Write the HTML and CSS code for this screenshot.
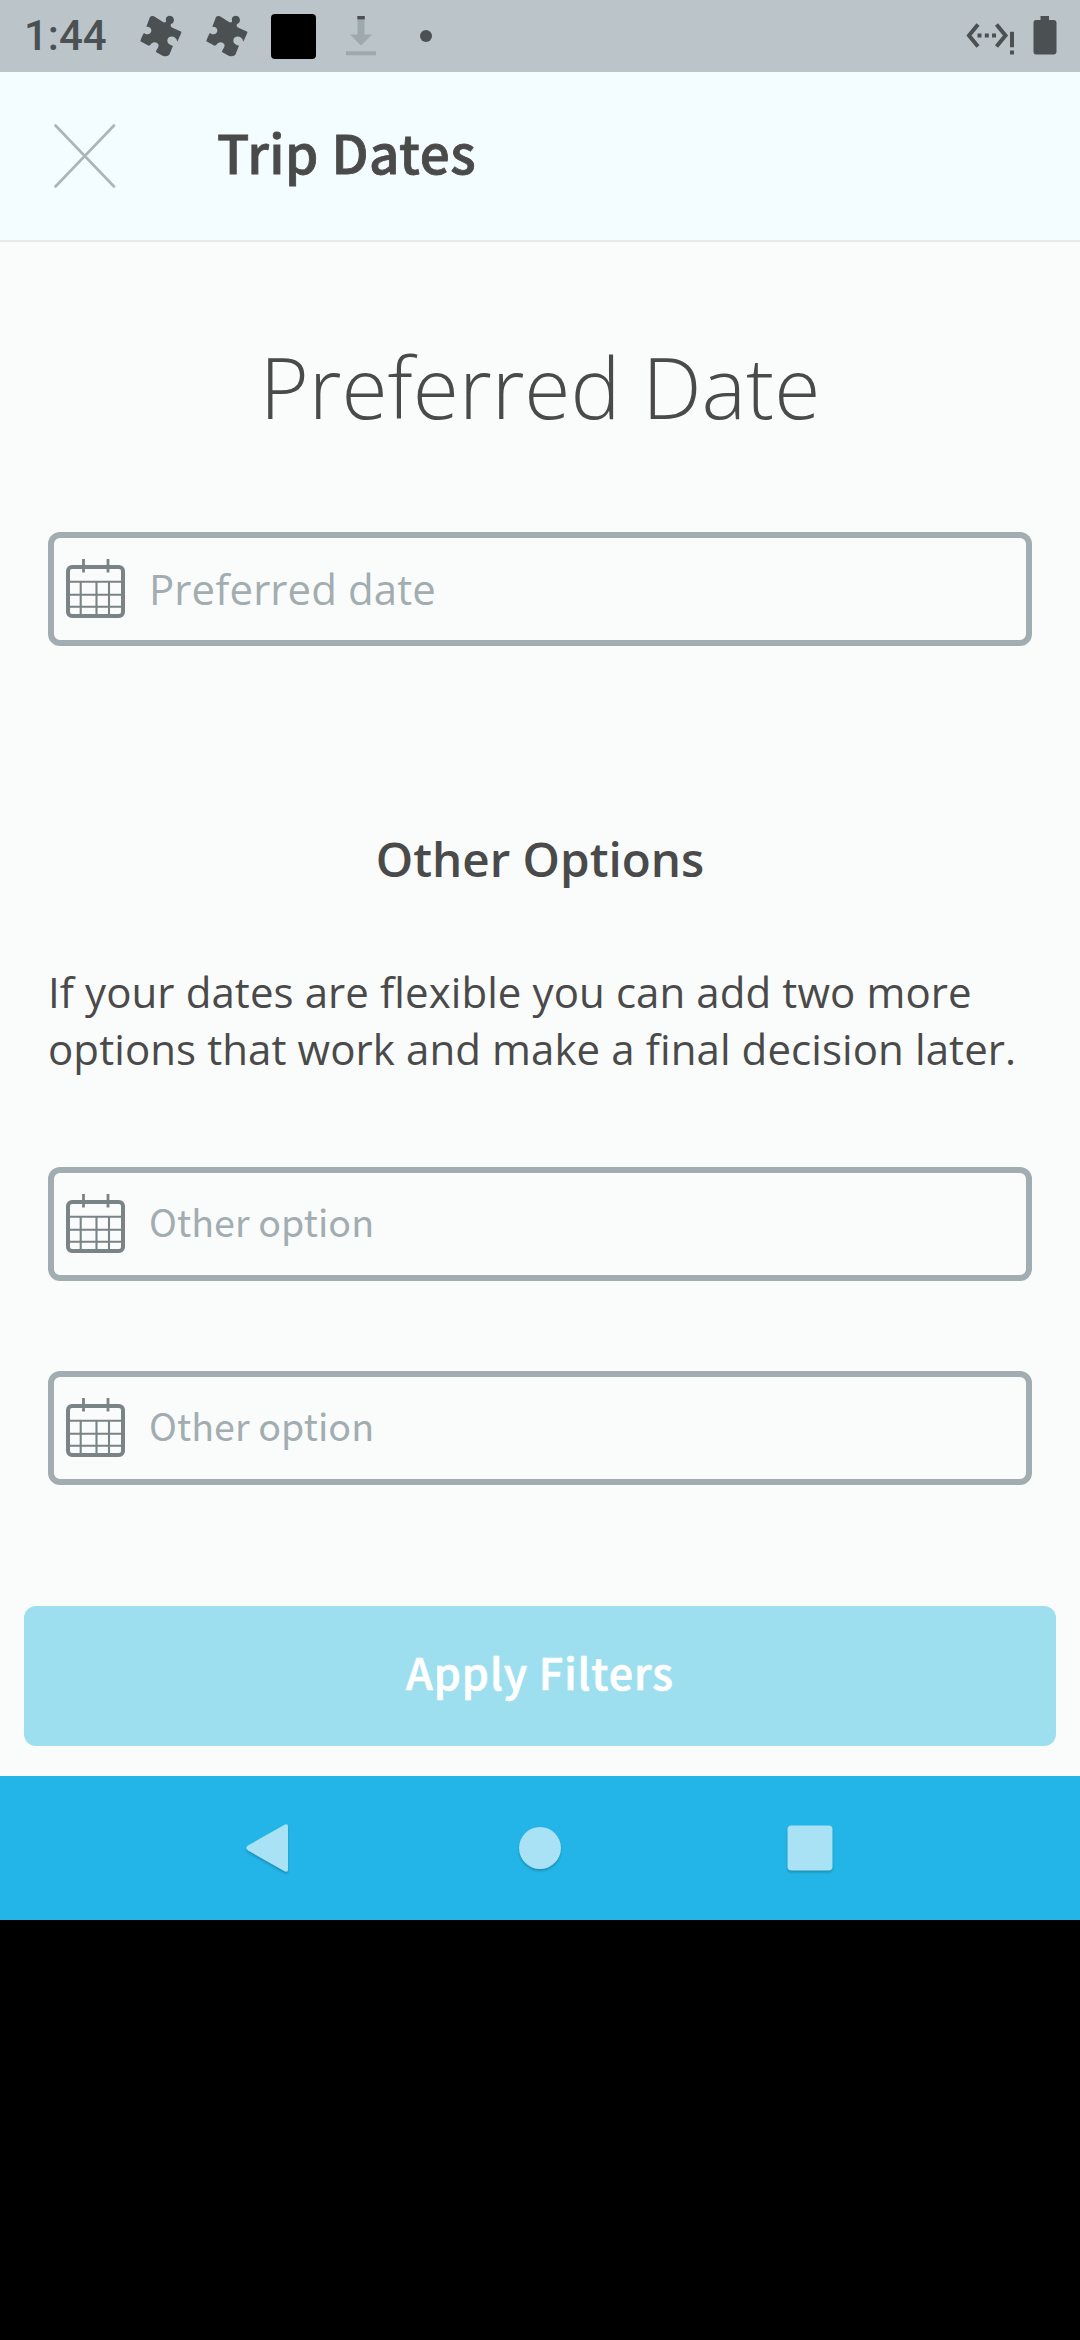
FILE: index.html
```html
<!DOCTYPE html>
<html lang="en">
<head>
<meta charset="utf-8">
<title>Trip Dates</title>
<link rel="stylesheet" href="styles.css">
</head>
<body>
<svg width="0" height="0" class="defs">
  <symbol id="puzzle" viewBox="418 42 132 132">
    <path d="M463 49L490 66Q500 70 499 62Q496 50 508 47Q522 47 523 60Q522 70 514 72Q510 80 520 84L545 95Q546 97 543 103L533 125C529 104 503 106 503 122Q503 133 520 137L509 164Q500 172 489 167L470 157C466 150 480 144 476 133Q468 122 456 130Q452 137 447 137L422 124Q422 118 433 98C440 108 456 102 455 90Q454 80 440 80L451 51Q456 46 463 49Z"/>
  </symbol>
  <symbol id="calendar" viewBox="0 0 60 60">
    <rect x="2" y="8" width="55" height="49" rx="4" fill="none" stroke-width="4"/>
    <path d="M17.5 0V13.5M42 0V13.5" stroke-width="2.8"/>
    <path d="M3 22.7H56M3 35.7H56M3 47.7H56M14.7 22.7V56M30.5 22.7V56M43 22.7V56" stroke-width="2.1"/>
  </symbol>
</svg>
<header class="status">
  <span class="clock">1:44</span>
  <svg class="puzzle"><use href="#puzzle"/></svg>
  <svg class="puzzle"><use href="#puzzle"/></svg>
  <span class="app-square"></span>
  <svg class="download" viewBox="0 0 30 40"><path class="arrow" d="M11.5 4H18.5V18.5H26L15 29.5L4 18.5H11.5ZM0 35.3H30V39.3H0Z"/><path class="tip" d="M11.3 0H18.8V3.5H11.3Z"/></svg>
  <span class="dot"></span>
  <svg class="network" viewBox="0 0 50 34"><path d="M12 2.5L3 13.5L12 24.5M30.500 2.500L39.500 13.500L30.500 24.500" fill="none" stroke-width="4"/><path class="solid" d="M11.500 11.600h4v4h-4zM18.800 11.600h4v4h-4zM26 11.600h4v4h-4zM44 9.800h4v15.500h-4zM44 28.500h4v4h-4z"/></svg>
  <svg class="battery" viewBox="0 0 24 40"><path d="M7.500 0H16V4H20.500Q23.500 4 23.500 7V35.500Q23.500 38.500 20.500 38.500H3Q.5 38.500 .5 35.500V7Q.5 4 3 4H7.500Z"/></svg>
</header>
<div class="appbar">
  <svg class="close" viewBox="0 0 62 64"><path d="M1.500 1.500L60 62.500M60 1.500L1.500 62.500"/></svg>
  <h1 class="title">Trip Dates</h1>
</div>
<main class="content">
  <h2 class="headline">Preferred Date</h2>
  <div class="field"><svg class="calendar"><use href="#calendar"/></svg><span class="placeholder">Preferred date</span></div>
  <h3 class="subhead">Other Options</h3>
  <p class="note">If your dates are flexible you can add two more<br>options that work and make a final decision later.</p>
  <div class="field field-option"><svg class="calendar"><use href="#calendar"/></svg><span class="placeholder">Other option</span></div>
  <div class="field field-option"><svg class="calendar"><use href="#calendar"/></svg><span class="placeholder">Other option</span></div>
  <div class="apply">Apply Filters</div>
</main>
<nav class="navbar">
  <svg class="nav-icon" viewBox="0 0 60 60"><path d="M45 6.500L8 27.500Q4.500 30 8 32.500L45 53.500Q48 54.500 48 51.500V8.500Q48 5.500 45 6.500Z"/></svg>
  <svg class="nav-icon" viewBox="0 0 60 60"><circle cx="30" cy="30" r="21"/></svg>
  <svg class="nav-icon" viewBox="0 0 60 60"><rect x="7.500" y="7.500" width="45" height="45" rx="4"/></svg>
</nav>
<div class="void"></div>
</body>
</html>
```
FILE: styles.css
```css
* { box-sizing: border-box; }
body { margin: 0; width: 1080px; height: 2340px; display: flex; flex-direction: column; background: #fafcfb; color: #4a4a4a; font-family: "Open Sans", sans-serif; }
h1, h2, h3, p { margin: 0; font-weight: normal; }
.defs { position: absolute; }
.status { height: 72px; display: flex; align-items: center; background: #bbc5c9; padding: 0 24px; }
.clock { width: 115px; font: 500 42px/72px Roboto, sans-serif; color: #4b5053; }
.puzzle { width: 44px; height: 44px; margin-right: 22px; fill: #4b5053; }
.app-square { width: 45px; height: 45px; border-radius: 4px; background: #000; margin-right: 30px; }
.download { width: 30px; height: 40px; margin-right: 44px; }
.arrow { fill: #9ea9ae; }
.tip { fill: #4b5053; }
.dot { width: 12px; height: 12px; border-radius: 50%; background: #4b5053; }
.network { width: 50px; height: 34px; margin: 6px 17px 0 auto; stroke: #4b5053; }
.solid { fill: #4b5053; stroke: none; }
.battery { width: 24px; height: 40px; margin-right: -4px; margin-right: -4px; fill: #4b5053; }
.status .battery { margin-right: -1px; }
.appbar { height: 170px; display: flex; align-items: center; padding-left: 54px; background: #f3fdff; border-bottom: 2px solid #e4e9eb; }
.close { width: 62px; height: 64px; stroke: #abb4b8; stroke-width: 2.6; stroke-linecap: round; }
.title { margin-left: 101px; padding-bottom: 10px; font: 500 53px/80px "Noto Sans CJK SC", sans-serif; letter-spacing: .5px; -webkit-text-stroke: .8px; }
.content { height: 1534px; padding: 0 48px; display: flex; flex-direction: column; }
.headline { margin-top: 80px; height: 210px; font-size: 84px; line-height: 130px; font-weight: 300; text-align: center; }
.field { flex: none; height: 114px; border: 6px solid #a2adb1; border-radius: 12px; display: flex; align-items: center; gap: 23px; padding-left: 12px; font-size: 42px; letter-spacing: .08px; color: #a2adb1; }
.placeholder { padding-bottom: 1px; }
.calendar { width: 60px; height: 60px; stroke: #7a8385; }
.subhead { margin-top: 180px; height: 66px; font-size: 47.6px; line-height: 66px; font-weight: 600; text-align: center; }
.note { margin-top: 71px; height: 115px; font-size: 42px; line-height: 57px; letter-spacing: .09px; white-space: nowrap; }
.field-option { margin-top: 89px; font-family: "Noto Sans CJK SC", sans-serif; font-size: 37.6px; }
.field-option + .field-option { margin-top: 90px; }
.field-option .placeholder { padding-bottom: 7px; }
.apply { margin: 121px -24px 0; height: 140px; padding-bottom: 10px; border-radius: 12px; background: #9ddfee; color: #fff; display: flex; align-items: center; justify-content: center; font: 500 43px/60px "Noto Sans CJK SC", sans-serif; letter-spacing: 1px; -webkit-text-stroke: .7px; }
.navbar { height: 144px; background: #23b5e8; display: flex; align-items: center; justify-content: center; gap: 210px; }
.nav-icon { width: 60px; height: 60px; fill: #a8e2f4; filter: drop-shadow(0 2px 1px rgba(0,0,0,.2)); }
.void { flex: 1; background: #000; }
```
